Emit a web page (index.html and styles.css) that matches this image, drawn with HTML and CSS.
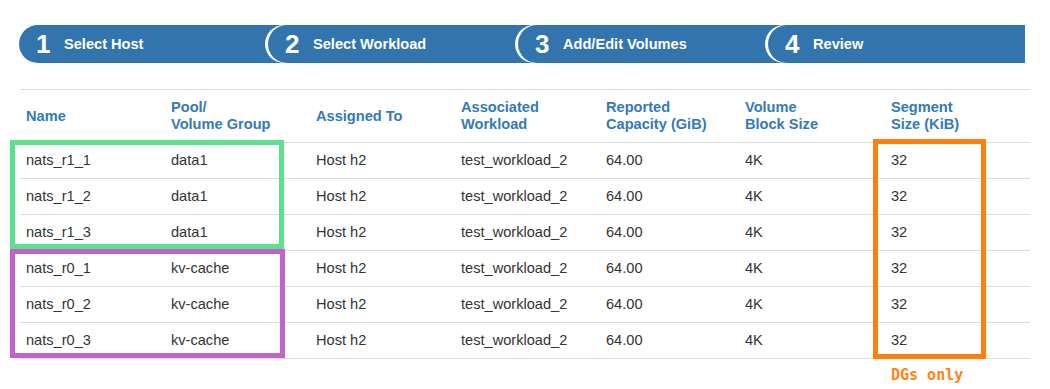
FILE: index.html
```html
<!DOCTYPE html>
<html>
<head>
<meta charset="utf-8">
<link rel="stylesheet" href="styles.css">
</head>
<body>
<div class="page">
  <div class="stepper">
    <div class="step first"><span class="num">1</span><span class="label">Select Host</span></div>
    <div class="step"><span class="num">2</span><span class="label">Select Workload</span></div>
    <div class="step"><span class="num">3</span><span class="label">Add/Edit Volumes</span></div>
    <div class="step last"><span class="num">4</span><span class="label">Review</span></div>
  </div>
  <table class="vols">
    <colgroup>
      <col class="c1"><col class="c2"><col class="c3"><col class="c4"><col class="c5"><col class="c6"><col class="c7">
    </colgroup>
    <thead>
      <tr>
        <th>Name</th>
        <th>Pool/<br>Volume Group</th>
        <th>Assigned To</th>
        <th>Associated<br>Workload</th>
        <th>Reported<br>Capacity (GiB)</th>
        <th>Volume<br>Block Size</th>
        <th>Segment<br>Size (KiB)</th>
      </tr>
    </thead>
    <tbody>
      <tr><td>nats_r1_1</td><td>data1</td><td>Host h2</td><td>test_workload_2</td><td>64.00</td><td>4K</td><td>32</td></tr>
      <tr><td>nats_r1_2</td><td>data1</td><td>Host h2</td><td>test_workload_2</td><td>64.00</td><td>4K</td><td>32</td></tr>
      <tr><td>nats_r1_3</td><td>data1</td><td>Host h2</td><td>test_workload_2</td><td>64.00</td><td>4K</td><td>32</td></tr>
      <tr><td>nats_r0_1</td><td>kv-cache</td><td>Host h2</td><td>test_workload_2</td><td>64.00</td><td>4K</td><td>32</td></tr>
      <tr><td>nats_r0_2</td><td>kv-cache</td><td>Host h2</td><td>test_workload_2</td><td>64.00</td><td>4K</td><td>32</td></tr>
      <tr><td>nats_r0_3</td><td>kv-cache</td><td>Host h2</td><td>test_workload_2</td><td>64.00</td><td>4K</td><td>32</td></tr>
    </tbody>
  </table>
  <div class="mark mark-green"></div>
  <div class="mark mark-purple"></div>
  <div class="mark mark-orange"></div>
  <div class="note">DGs only</div>
</div>
</body>
</html>
```
FILE: styles.css
```css
html, body {
  margin: 0;
  padding: 0;
  background: #fff;
}
body {
  font-family: "Liberation Sans", Arial, sans-serif;
  font-size: 14.6px;
  color: #333;
}
.page {
  position: relative;
  width: 1050px;
  height: 389px;
  padding-top: 25px;
  box-sizing: border-box;
}
.stepper {
  display: flex;
  margin-left: 19px;
  width: 1006px;
  height: 38px;
}
.step {
  position: relative;
  display: flex;
  align-items: center;
  background: #3274ae;
  color: #fff;
  width: 270px;
  margin-right: -20px;
  border-radius: 19px 0 0 19px;
  box-shadow: -3px 0 0 0 #fff;
  box-sizing: border-box;
  padding-left: 17px;
}
.step.first {
  box-shadow: none;
  width: 269px;
}
.step.last {
  flex: 1;
  margin-right: 0;
}
.num {
  font-weight: bold;
  font-size: 26px;
  line-height: 38px;
  width: 28px;
}
.label {
  font-weight: bold;
  font-size: 14.6px;
}
.vols {
  margin-top: 26px;
  margin-left: 20px;
  width: 1010px;
  border-collapse: collapse;
  table-layout: fixed;
}
.c1, .c2, .c3, .c4, .c7 { width: 145px; }
.c5 { width: 139px; }
.c6 { width: 146px; }
.vols thead tr { border-top: 1px solid #ddd; }
.vols th {
  text-align: left;
  color: #337ab7;
  font-weight: bold;
  font-size: 14.6px;
  line-height: 17px;
  padding: 9px 6px 9px 6px;
  vertical-align: middle;
  border-bottom: 1px solid #ddd;
}
.vols td {
  padding: 8px 6px;
  line-height: 19px;
  border-bottom: 1px solid #ddd;
  white-space: nowrap;
}
.mark {
  position: absolute;
  box-sizing: border-box;
  border: 5px solid;
}
.mark-green {
  left: 10px; top: 140px; width: 274px; height: 109px;
  border-color: #5de08b;
}
.mark-purple {
  left: 10px; top: 249px; width: 275px; height: 109px;
  border-color: #c262cc;
}
.mark-orange {
  left: 873px; top: 139px; width: 113px; height: 220px;
  border-color: #ff7f0e;
}
.note {
  position: absolute;
  left: 891px;
  top: 366px;
  font-family: "DejaVu Sans Mono", monospace;
  font-weight: bold;
  font-size: 15px;
  line-height: 18px;
  color: #ff8416;
}
```
